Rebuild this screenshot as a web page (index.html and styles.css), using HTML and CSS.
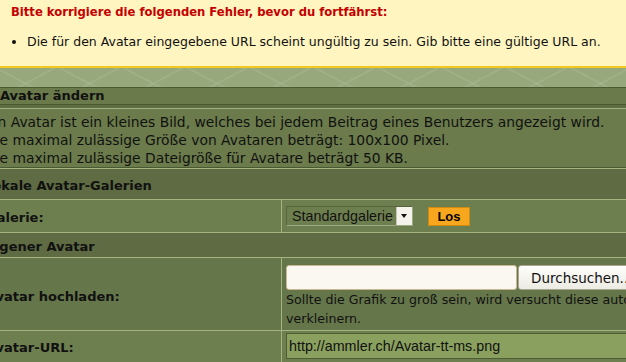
FILE: index.html
```html
<!DOCTYPE html>
<html lang="de">
<head>
    <meta charset="UTF-8">
    <title>Avatar ändern</title>
    <link rel="stylesheet" href="styles.css">
</head>
<body>
    <div class="errorbox">
        <h3>Bitte korrigiere die folgenden Fehler, bevor du fortfährst:</h3>
        <ul>
            <li>Die für den Avatar eingegebene URL scheint ungültig zu sein. Gib bitte eine gültige URL an.</li>
        </ul>
    </div>
    <div class="band"></div>

    <form class="panel">
        <div class="title">Avatar ändern</div>
        <div class="explain">
            Ein Avatar ist ein kleines Bild, welches bei jedem Beitrag eines Benutzers angezeigt wird.<br>
            Die maximal zulässige Größe von Avataren beträgt: 100x100 Pixel.<br>
            Die maximal zulässige Dateigröße für Avatare beträgt 50 KB.
        </div>

        <div class="cat cat-gallery">Lokale Avatar-Galerien</div>
        <div class="row row-gallery">
            <div class="label">Galerie:</div>
            <div class="field">
                <span class="select">Standardgalerie<span class="arrow"></span></span>
                <button type="button" class="btn-go">Los</button>
            </div>
        </div>

        <div class="cat cat-own">Eigener Avatar</div>
        <div class="row row-upload">
            <div class="label">Avatar hochladen:</div>
            <div class="field">
                <div class="file">
                    <input type="text" class="file-name">
                    <button type="button" class="browse">Durchsuchen...</button>
                </div>
                <p class="hint">Sollte die Grafik zu groß sein, wird versucht diese automatisch zu verkleinern.</p>
            </div>
        </div>
        <div class="row row-url">
            <div class="label">Avatar-URL:</div>
            <div class="field">
                <input type="text" class="url" value="http://ammler.ch/Avatar-tt-ms.png">
            </div>
        </div>
    </form>
</body>
</html>
```

FILE: styles.css
```css
html, body {
    margin: 0;
    padding: 0;
    overflow: hidden;
}
body {
    font-family: "DejaVu Sans", Verdana, sans-serif;
    background-color: #6b7b4b;
    color: #111;
    width: 626px;
    height: 362px;
}
.errorbox {
    background-color: #fff5c1;
    border-bottom: 2px solid #f3c81f;
    height: 68px;
    box-sizing: border-box;
    padding: 5px 11px 0;
}
.errorbox h3 {
    margin: 0;
    font-size: 11.6px;
    font-weight: bold;
    color: #c40000;
    line-height: 14px;
}
.errorbox ul {
    margin: 16px 0 0;
    padding-left: 16px;
    font-size: 12.5px;
    line-height: 14px;
}
.band {
    height: 19px;
    background-color: #97a87d;
    background-image:
        repeating-linear-gradient(28deg, transparent 0 14px, rgba(172,187,145,0.4) 14px 16px, transparent 16px 30px),
        repeating-linear-gradient(-28deg, transparent 0 14px, rgba(172,187,145,0.4) 14px 16px, transparent 16px 30px);
    border-bottom: 1px solid #4b5a31;
}

/* Formular */
.panel {
    margin-left: -18px;
    width: 740px;
}
.title {
    height: 16px;
    line-height: 16px;
    padding-left: 18px;
    font-size: 13px;
    font-weight: bold;
    background-color: #6a7a4a;
    border-bottom: 1px solid #4a5a30;
}
.explain {
    font-size: 13.85px;
    line-height: 18px;
    padding: 5px 4px 0 3px;
    background-color: #6b7b4b;
    border-top: 3px solid #5f6d45;
    box-shadow: inset 0 1px #a2b17c;
    border-bottom: 1px solid #4a5a30;
}
.cat {
    display: flex;
    align-items: center;
    padding-left: 4px;
    font-size: 13px;
    font-weight: bold;
    background-color: #5e6b43;
    border-bottom: 1px solid #a5b47e;
}
.cat-gallery {
    border-top: 1px solid #a5b47e;
    padding-top: 2px;
    padding-left: 2px;
    box-sizing: border-box;
    height: 32px;
}
.cat-own {
    height: 25px;
    padding-top: 2px;
    box-sizing: border-box;
}
.row {
    display: grid;
    grid-template-columns: 300px 1fr;
    border-bottom: 1px solid #a5b47e;
}
.label {
    display: flex;
    align-items: center;
    padding-left: 4px;
    font-size: 13px;
    font-weight: bold;
    border-right: 1px solid #a5b47e;
}
.field {
    padding-left: 4px;
}
.row-gallery {
    height: 33px;
    box-sizing: border-box;
    background-color: #6e7f4f;
}
.row-gallery .label {
    padding-top: 2px;
}
.row-gallery .field {
    display: flex;
    align-items: center;
}
.row-upload {
    height: 73px;
    box-sizing: border-box;
    background-color: #65764a;
}
.row-upload .label {
    padding-top: 4px;
}
.row-url {
    height: 32px;
    background-color: #6e7f4f;
}

/* Galerie-Auswahl */
.select {
    display: inline-flex;
    align-items: center;
    height: 20px;
    box-sizing: border-box;
    border: 1px solid #55643a;
    border-right-color: #9aa982;
    border-bottom-color: #9aa982;
    padding-left: 5px;
    font-family: "Liberation Sans", Arial, sans-serif;
    font-size: 14.3px;
    color: #111;
    background-color: #6e7f4f;
}
.arrow {
    display: inline-block;
    width: 15px;
    height: 18px;
    margin-left: 3px;
    background-color: #f4f2ea;
    border-left: 1px solid #c9c6b8;
    position: relative;
}
.arrow::after {
    content: "";
    position: absolute;
    left: 4px;
    top: 7px;
    border-left: 3px solid transparent;
    border-right: 3px solid transparent;
    border-top: 4px solid #111;
}
.btn-go {
    margin-left: 15px;
    margin-top: 1px;
    width: 42px;
    height: 19px;
    padding: 0;
    background-color: #f9a61f;
    border: 1px solid #cf8a12;
    font-family: "Liberation Sans", Arial, sans-serif;
    font-weight: bold;
    font-size: 13px;
    color: #000;
}

/* Upload */
.file {
    display: flex;
    gap: 1px;
    margin-top: 7px;
}
.file-name {
    width: 231px;
    height: 25px;
    box-sizing: border-box;
    background-color: #fbf8f1;
    border: 1px solid #c9b78f;
    border-radius: 3px;
    margin: 0;
}
.browse {
    height: 25px;
    padding: 0 12px;
    background: linear-gradient(#fdfdfb, #ecebe3);
    border: 1px solid #a9a78f;
    border-radius: 3px;
    font-family: "DejaVu Sans", Verdana, sans-serif;
    font-size: 13.5px;
    color: #111;
    white-space: nowrap;
}
.hint {
    margin: 0;
    font-size: 12.6px;
    line-height: 19px;
    width: 470px;
}
.url {
    width: 400px;
    height: 26px;
    box-sizing: border-box;
    margin-top: 2px;
    padding: 0 2px;
    background-color: #8aa05f;
    border: 1px solid #4f5d35;
    font-family: "Liberation Sans", Arial, sans-serif;
    font-size: 14.3px;
    color: #111;
}
```
